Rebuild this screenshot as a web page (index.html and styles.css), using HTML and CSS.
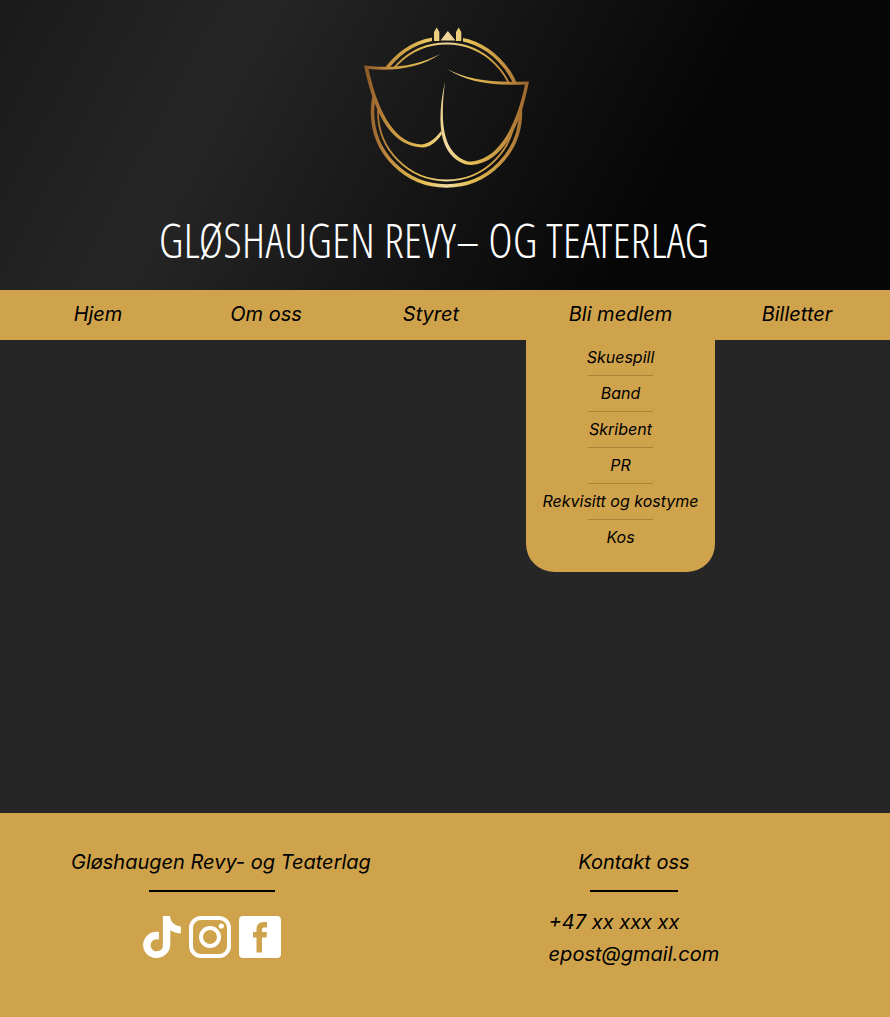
FILE: index.html
```html
<!DOCTYPE html>
<html lang="no">
<head>
<meta charset="utf-8">
<meta name="viewport" content="width=device-width, initial-scale=1">
<title>Gløshaugen Revy- og Teaterlag</title>
<link rel="stylesheet" href="styles.css">
</head>
<body>
<header class="banner">
  <svg class="logo" viewBox="360 24 174 168" role="img" aria-label="Logo">
    <defs>
      <linearGradient id="gold" gradientUnits="userSpaceOnUse" x1="365" y1="0" x2="529" y2="0">
        <stop offset="0" stop-color="#8d5727"/>
        <stop offset=".15" stop-color="#c4903f"/>
        <stop offset=".36" stop-color="#e5c054"/>
        <stop offset=".5" stop-color="#f1d9a0"/>
        <stop offset=".64" stop-color="#e5c054"/>
        <stop offset=".85" stop-color="#c4903f"/>
        <stop offset="1" stop-color="#9a632b"/>
      </linearGradient>
      <mask id="behind" maskUnits="userSpaceOnUse" x="360" y="24" width="174" height="168">
        <rect x="360" y="24" width="174" height="168" fill="#fff"/>
        <path d="M366 67C392 70 418 67 440 54L441 133C434 143 428 146 423 146C396 146 378 118 366 67Z"/>
        <path d="M527 83C494 85 466 81 447 70L445 82C437 122 440 155 467 163C499 165 519 128 527 83Z"/>
        <rect x="432" y="24" width="31" height="18"/>
      </mask>
    </defs>
    <g fill="none" stroke="url(#gold)" mask="url(#behind)">
      <circle cx="446.500" cy="112" r="74" stroke-width="3.500"/>
      <circle cx="446.500" cy="112" r="68.500" stroke-width="1.800"/>
    </g>
    <g fill="url(#gold)">
      <path d="M364 65.500C393 69 417 66 440.500 54C418 69 393 71 368.500 69C379 117 397 144 422 144.500C430 143 436 138 441 131L442 134C435 144 429 147 423 147.500C394 147 375 119 364 65.500Z"/>
      <path d="M447 69C468 80 494 83 529 81.500C520 129 502 163 471 165L466 164.500C439 156 436 122 445 81.500C440 122 442 153 468 161.500C497 162 516 128 525 84.500C492 86 467 82 447 69Z"/>
      <path d="M434 41V32L436.700 27.500L439.300 32V41Z"/>
      <path d="M440.500 40.500L447.800 31L455.500 40.500Z"/>
      <path d="M456 41V32L458.700 27.500L461.300 32V41Z"/>
    </g>
  </svg>
  <h1 class="title">GLØSHAUGEN REVY– OG TEATERLAG</h1>
</header>
<nav class="nav" aria-label="Hovedmeny">
  <ul class="nav-list">
    <li class="nav-item"><a href="#hjem">Hjem</a></li>
    <li class="nav-item"><a href="#om-oss">Om oss</a></li>
    <li class="nav-item"><a href="#styret">Styret</a></li>
    <li class="nav-item">
      <a href="#bli-medlem">Bli medlem</a>
      <ul class="submenu">
        <li><a href="#skuespill">Skuespill</a></li>
        <li><a href="#band">Band</a></li>
        <li><a href="#skribent">Skribent</a></li>
        <li><a href="#pr">PR</a></li>
        <li><a href="#rekvisitt">Rekvisitt og kostyme</a></li>
        <li><a href="#kos">Kos</a></li>
      </ul>
    </li>
    <li class="nav-item"><a href="#billetter">Billetter</a></li>
  </ul>
</nav>
<main class="content"></main>
<footer class="footer">
  <section class="about">
    <h2 class="footer-title">Gløshaugen Revy- og Teaterlag</h2>
    <div class="social">
      <hr class="rule rule-wide">
      <div class="icons">
        <a href="#tiktok" aria-label="TikTok"><svg class="icon-tiktok" viewBox="1.500 0 21 24" preserveAspectRatio="none" fill="currentColor"><path d="M12.525.02c1.310-.02 2.610-.01 3.910-.02.08 1.530.63 3.090 1.750 4.170 1.120 1.110 2.700 1.620 4.240 1.790v4.030c-1.440-.05-2.890-.35-4.200-.97-.57-.26-1.100-.59-1.620-.93-.01 2.920.01 5.840-.02 8.750-.08 1.400-.54 2.790-1.350 3.940-1.310 1.920-3.580 3.170-5.910 3.210-1.430.08-2.860-.31-4.080-1.030-2.020-1.190-3.440-3.370-3.650-5.710-.02-.5-.03-1-.01-1.490.18-1.900 1.120-3.720 2.580-4.960 1.660-1.440 3.980-2.130 6.150-1.720.02 1.480-.04 2.960-.04 4.440-.99-.32-2.150-.23-3.020.37-.63.41-1.110 1.040-1.360 1.750-.21.51-.15 1.070-.14 1.610.24 1.640 1.820 3.020 3.500 2.870 1.120-.01 2.190-.66 2.770-1.610.19-.33.4-.67.41-1.060.1-1.790.06-3.570.07-5.360.01-4.030-.01-8.050.02-12.070z"/></svg></a>
        <a href="#instagram" aria-label="Instagram"><svg class="icon" viewBox="0 0 42 42" fill="none" stroke="currentColor" stroke-width="4"><rect x="2" y="2" width="38" height="38" rx="10"/><circle cx="21" cy="21" r="9"/><circle cx="32.300" cy="10" r="2.600" fill="currentColor" stroke="none"/></svg></a>
        <a href="#facebook" aria-label="Facebook"><svg class="icon" viewBox="0 0 42 42" fill="currentColor"><path fill-rule="evenodd" d="M4 0H38Q42 0 42 4V38Q42 42 38 42H4Q0 42 0 38V4Q0 0 4 0ZM28 6H25Q17.500 6 17.500 13V16H14V21.500H17.500V36.500H23V21.500H27.500L28 16H23V13.500Q23 11.500 25 11.500H28Z"/></svg></a>
      </div>
    </div>
  </section>
  <section class="contact">
    <h2 class="footer-title">Kontakt oss</h2>
    <hr class="rule">
    <address class="contact-lines">
      <a href="tel:+47">+47 xx xxx xx</a>
      <a href="mailto:epost@gmail.com">epost@gmail.com</a>
    </address>
  </section>
</footer>
</body>
</html>
```
FILE: styles.css
```css
:root {
  --gold: #cfa34b;
  --dark: #262626;
}

* { box-sizing: border-box; }

body {
  margin: 0;
  min-height: 100vh;
  display: flex;
  flex-direction: column;
  background: var(--dark);
  color: #000;
  font-family: Inter, "Liberation Sans", sans-serif;
  font-size: 20px;
  font-style: italic;
  line-height: 32px;
}

a { color: inherit; text-decoration: none; }

ul { list-style: none; margin: 0; padding: 0; }

.banner {
  display: flex;
  flex-direction: column;
  align-items: center;
  gap: 16px;
  padding: 24px 0 18px 4px;
  background: linear-gradient(118deg, #1a1a1a 0%, #262626 25%, #060606 73%, #060606 100%);
}

.logo { width: 174px; height: 168px; }

.title {
  margin: 0;
  padding-right: 26px;
  color: #fff;
  font-family: "Open Sans Condensed Light", "Roboto Condensed", sans-serif;
  font-size: 47px;
  font-style: normal;
  font-weight: 300;
  line-height: 64px;
  white-space: nowrap;
}

.nav { background: var(--gold); padding-right: 11px; }

.nav-list {
  display: grid;
  grid-template-columns: 196fr 140fr 190fr 189fr 164fr;
}

.nav-item {
  position: relative;
  padding: 8px 0 10px;
  text-align: center;
}

.submenu {
  position: absolute;
  top: 100%;
  left: 0;
  right: 0;
  padding-bottom: 17px;
  border-radius: 0 0 28px 28px;
  background: var(--gold);
  font-size: 16px;
  line-height: 35px;
}

.submenu li {
  display: flex;
  flex-direction: column;
  align-items: center;
  white-space: nowrap;
}

.submenu li:not(:last-child)::after {
  content: "";
  width: 65px;
  height: 1px;
  background: #aa8339;
}

.content { flex: 1; }

.footer {
  display: flex;
  gap: 70px;
  min-height: 204px;
  padding: 33px 63px 47px 71px;
  background: var(--gold);
}

.about { flex: none; }

.footer-title {
  margin: 0 0 12px;
  font-size: 20px;
  font-weight: 400;
  line-height: 32px;
}

.social {
  display: flex;
  flex-direction: column;
  align-items: center;
  gap: 24px;
  padding-right: 18px;
}

.rule {
  width: 88px;
  height: 2px;
  margin: 0;
  border: 0;
  background: #000;
}

.rule-wide { width: 126px; }

.icons { display: flex; gap: 8px; color: #fff; }

.icons a { display: flex; }

.icon { width: 42px; height: 42px; }

.icon-tiktok { width: 38px; height: 42px; }

.contact {
  flex: 1;
  display: flex;
  flex-direction: column;
  align-items: center;
}

.contact-lines {
  display: flex;
  flex-direction: column;
  margin-top: 14px;
}
```
